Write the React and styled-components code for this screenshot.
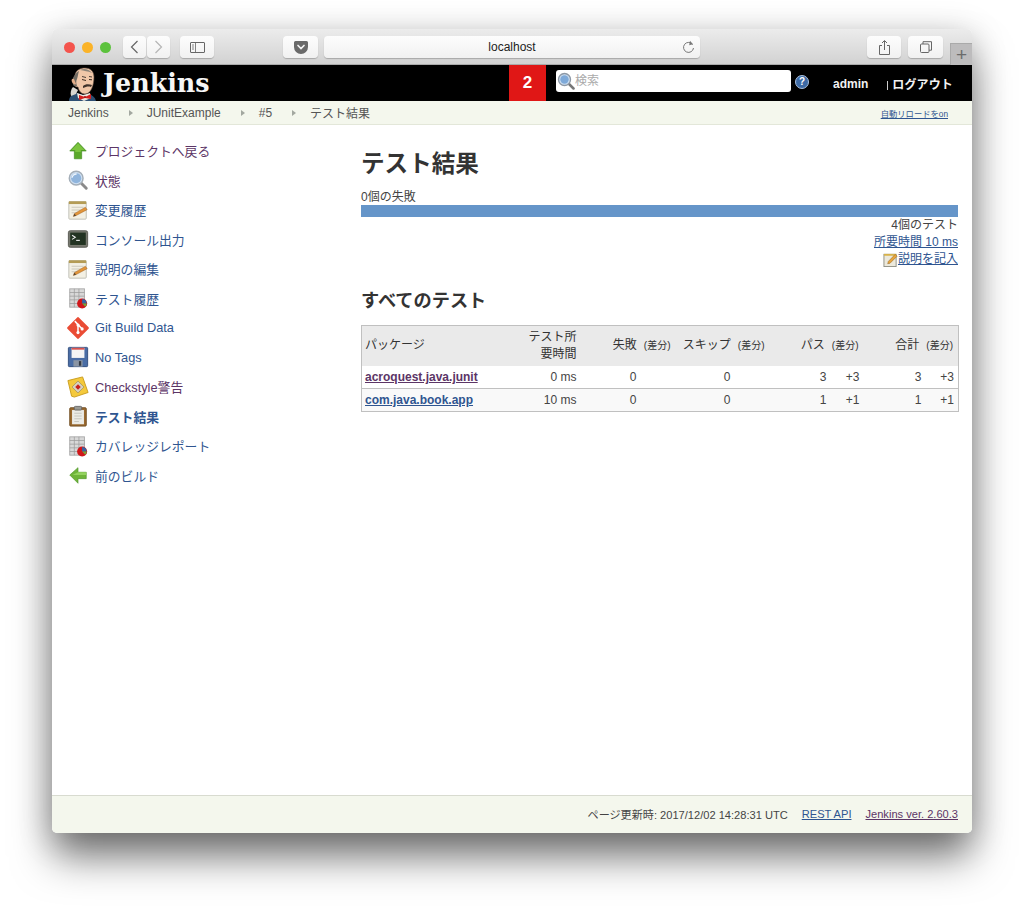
import React from "react";
import styled, { createGlobalStyle } from "styled-components";

const SANS = `"Liberation Sans", "Noto Sans CJK JP", sans-serif`;
const LINK = "#2f5590";
const VISITED = "#5c3566";

const Global = createGlobalStyle`
  html, body { margin: 0; padding: 0; background: #fff; }
  body { font-family: ${SANS}; }
  * { box-sizing: border-box; }
`;

const Stage = styled.div`
  width: 1024px; height: 907px; padding: 29px 52px 74px; overflow: hidden;
  background: #fff;
`;
const Win = styled.div`
  width: 920px; height: 804px; display: flex; flex-direction: column;
  border-radius: 5px; background: #fff;
  box-shadow: 0 26px 40px -2px rgba(0,0,0,.5), 0 6px 34px rgba(0,0,0,.22);
`;
const TitleBar = styled.div`
  height: 36px; flex: none; display: flex; align-items: center; padding: 1px 0 0 12px;
  border-radius: 5px 5px 0 0;
  background: linear-gradient(#ececec, #d2d2d2);
  border-bottom: 1px solid #aaa;
`;
const Lights = styled.div`display: flex; gap: 7px; margin-right: 12px;`;
const Light = styled.span`
  width: 11px; height: 11px; border-radius: 50%; background: ${p => p.$c};
`;
const ChromeBtn = styled.div`
  width: ${p => p.$w}px; height: 22px; margin-left: ${p => p.$ml || 0}px; flex: none;
  display: flex; align-items: center; justify-content: center;
  border-radius: 4px; background: linear-gradient(#fdfdfd, #f1f1f1);
  box-shadow: 0 1px 1px rgba(0,0,0,.22); color: ${p => p.$dim ? "#b5b5b5" : "#666"};
`;
const UrlBar = styled(ChromeBtn)`
  position: relative; font-size: 12px; color: #222; justify-content: center;
`;
const Reload = styled.span`
  position: absolute; right: 5px; top: 4px; display: flex; color: #777;
`;
const PlusTab = styled.div`
  width: 22px; height: 22px; margin-left: auto; align-self: flex-end; flex: none;
  background: #bdbcbd; border-left: 1px solid #aaa; border-top: 1px solid #aaa;
  color: #6b6b6b; font-size: 19px; font-weight: 300; line-height: 22px; text-align: center;
  margin-bottom: -1px;
`;

const Header = styled.header`
  height: 36px; flex: none; display: flex; align-items: stretch; background: #000; color: #fff;
  padding-left: 16px;
`;
const Brand = styled.div`display: flex; align-items: flex-end; width: 441px; flex: none;`;
const Wordmark = styled.span`
  font-family: "DejaVu Serif", serif; font-weight: 700; font-size: 25.4px; line-height: 34px;
  margin: 0 0 0 5px; align-self: center;
  color: #f6f6f6;
`;
const Badge = styled.div`
  width: 37px; background: #e01716; color: #fff; font-weight: 700; font-size: 17px;
  display: flex; align-items: center; justify-content: center; flex: none;
`;
const SearchBox = styled.div`
  width: 235px; height: 22px; margin: 5px 0 0 10px; border-radius: 3px; background: #fff; flex: none;
  display: flex; align-items: center; padding-left: 1px; color: #aaa; font-size: 12px;
`;
const Placeholder = styled.span`margin-top: -3px;`;
const HelpIcon = styled.div`
  width: 14px; height: 14px; margin: 10px 0 0 4px; border-radius: 50%; background: #3d6aa5;
  border: 1px solid #a9c0de; color: #fff; font-weight: 700; font-size: 10px; line-height: 12px;
  text-align: center; flex: none;
`;
const UserName = styled.span`
  font-size: 12px; font-weight: 700; margin-left: 24px; align-self: center; padding-top: 2px; color: #f2f2f2;
`;
const Logout = styled.span`
  font-size: 12px; font-weight: 700; margin-left: 19px; align-self: center; color: #f2f2f2; letter-spacing: .1px;
  &::before { content: ""; display: inline-block; width: 1px; height: 9px; background: #ccc; margin-right: 4px; vertical-align: -1px; }
`;

const Crumbs = styled.nav`
  height: 24px; flex: none; display: flex; align-items: center; padding: 0 24px 0 16px;
  background: #f4f7ed; border-bottom: 1px solid #e3e7d9; font-size: 12px; color: #555;
`;
const Crumb = styled.span``;
const CrumbArrow = styled.span`
  width: 0; height: 0; margin: 0 14px 0 20px;
  border-left: 4px solid #a3a8a0; border-top: 3.5px solid transparent; border-bottom: 3.5px solid transparent;
`;
const AutoReload = styled.a`
  margin-left: auto; font-size: 8.3px; color: ${LINK}; text-decoration: underline;
`;

const Body = styled.div`flex: 1; display: flex; min-height: 0;`;
const Side = styled.aside`
  width: 309px; flex: none; padding: 11px 0 0 15px; display: flex; flex-direction: column;
`;
const SideItem = styled.a`
  height: 29.5px; display: flex; align-items: center; gap: 6px; font-size: 12.8px;
  color: ${p => p.$visited ? VISITED : LINK}; font-weight: ${p => p.$active ? 700 : 400};
  svg { width: 22px; height: 22px; flex: none; }
`;
const Main = styled.main`flex: 1; padding: 25px 14px 0 0; min-width: 0;`;
const H1 = styled.h1`
  margin: 0; font-size: 23.6px; line-height: 28px; font-weight: 700; color: #333;
`;
const FailLine = styled.div`margin-top: 11px; font-size: 12px; line-height: 17px; color: #444;`;
const Bar = styled.div`height: 12px; background: #6595c9; margin-top: -1px;`;
const Meta = styled.div`
  text-align: right; font-size: 12px; line-height: 17px; color: #444;
`;
const MetaLink = styled.a`color: ${LINK}; text-decoration: underline; `;
const NoteIcon = styled.span`svg { width: 15px; height: 15px; vertical-align: -4px; }`;
const H2 = styled.h2`
  margin: 20px 0 11px; font-size: 18.2px; line-height: 26px; font-weight: 700; color: #333;
`;
const Table = styled.table`
  width: 597px; table-layout: fixed; border-collapse: collapse; font-size: 12px; color: #444;
  border: 1px solid #c0c0c0;
`;
const Th = styled.th`
  background: #eaeaea; font-weight: 400; height: 40px; line-height: 17px;
  padding: 0 4px 0 ${p => p.$left ? 3 : 4}px;
  text-align: ${p => p.$left ? "left" : "right"}; color: #333;
`;
const Small = styled.small`font-size: 10px; margin: 0 1px 0 7px;`;
const Tr = styled.tr`
  background: ${p => p.$alt ? "#f9f9f9" : "#fff"}; border-bottom: 1px solid #c0c0c0;
`;
const Td = styled.td`
  height: 23px; padding: 0 4px; text-align: right;
`;
const NameTd = styled(Td)`text-align: left; padding-left: 3px;`;
const PkgLink = styled.a`
  font-weight: 700; text-decoration: underline;
  color: ${p => p.$visited ? VISITED : LINK};
`;
const Footer = styled.footer`
  height: 38px; flex: none; display: flex; align-items: center; justify-content: flex-end; gap: 14px;
  padding: 0 14px 1px; background: #f4f7ed; border-top: 1px solid #d8dbd0; font-size: 11.1px; color: #444;
  border-radius: 0 0 5px 5px;
`;
const FootLink = styled.a`
  color: ${p => p.$visited ? VISITED : LINK}; text-decoration: underline;
`;

/* ---- icons ---- */
const UpArrow = () => (
  <svg viewBox="0 0 24 24"><path d="M12 2.5 21 12h-5v8.5H8V12H3z" fill="#5aa82a" stroke="#3f8a1c" strokeWidth=".7"/><path d="M12 3.5 19 11h-4v2H9v-2H5z" fill="#7cc43f"/></svg>
);
const LeftArrow = () => (
  <svg viewBox="0 0 24 24"><path d="M3 12l9-8v5h9v7h-9v5z" fill="#6fb43a" stroke="#4f9528" strokeWidth=".7"/><path d="M12 9h9v3H6z" fill="#93d25e"/></svg>
);
const Magnifier = () => (
  <svg viewBox="0 0 24 24">
    <path d="M14.5 14.5 21 21" stroke="#8a8a8a" strokeWidth="3.2" strokeLinecap="round"/>
    <circle cx="10" cy="10" r="7.5" fill="#cfe0f2" stroke="#a4aeb8" strokeWidth="1.6"/>
    <circle cx="10" cy="10" r="5.5" fill="#8fb4dc"/>
    <path d="M5.5 9.5a4.5 4.5 0 0 1 5-4" fill="none" stroke="#eef5fc" strokeWidth="1.4"/>
  </svg>
);
const Notepad = () => (
  <svg viewBox="0 0 24 24">
    <rect x="2" y="3" width="19" height="19" rx="1" fill="#f3f0e4" stroke="#bdbdb3"/>
    <rect x="2" y="2.5" width="19" height="3" fill="#b49c55"/>
    <path d="M5 9h13M5 12h10M5 15h6" stroke="#c9c6b8"/>
    <path d="M7 19l1-3L20 9l2 2.6L10 18z" fill="#e2953a" stroke="#9a5c1e" strokeWidth=".5"/>
    <path d="M7 19l1-3 2 2z" fill="#5a4630"/>
  </svg>
);
const Terminal = () => (
  <svg viewBox="0 0 24 24">
    <rect x="1.5" y="3" width="21" height="18" rx="2" fill="#77796f" stroke="#55574f"/>
    <rect x="3.5" y="5" width="17" height="13.5" fill="#223322"/>
    <path d="M5.5 8l3.5 2.2-3.5 2.2" fill="none" stroke="#eee" strokeWidth="1.2"/>
    <path d="M10 13.5h4" stroke="#eee" strokeWidth="1.2"/>
  </svg>
);
const ChartDoc = () => (
  <svg viewBox="0 0 24 24">
    <rect x="3" y="2" width="16" height="20" fill="#d8d8d8" stroke="#a9a9a9"/>
    <path d="M3 6h16M3 10h16M3 14h16M3 18h16M8 2v20M13 2v20" stroke="#9a9a9a" strokeWidth=".8"/>
    <circle cx="16.5" cy="18" r="5.5" fill="#d0161a"/>
    <path d="M16.5 18V13a5 5 0 0 1 5 5z" fill="#3465a4"/>
    <path d="M16.5 18h5a5 5 0 0 1-1.5 3.5z" fill="#73a63a"/>
  </svg>
);
const GitIcon = () => (
  <svg viewBox="0 0 24 24">
    <rect x="3.2" y="3.2" width="17.6" height="17.6" rx="1.6" transform="rotate(45 12 12)" fill="#ea4c35"/>
    <path d="M8.5 4.5l8 8.5M12 9v8" stroke="#fff" strokeWidth="1.6" fill="none"/>
    <circle cx="12" cy="8.8" r="1.7" fill="#fff"/><circle cx="12" cy="17" r="1.7" fill="#fff"/><circle cx="16.5" cy="13" r="1.7" fill="#fff"/>
  </svg>
);
const Floppy = () => (
  <svg viewBox="0 0 24 24">
    <rect x="1.5" y="1.5" width="21" height="21" rx="1" fill="#4a6da5" stroke="#2f4c7c"/>
    <rect x="5" y="2" width="14" height="11" fill="#f5f5f5"/>
    <rect x="5" y="2" width="14" height="2" fill="#d9534f"/>
    <rect x="7" y="15.5" width="10" height="7" fill="#8b95a3"/>
    <rect x="13" y="16.5" width="2.5" height="5" fill="#333a44"/>
  </svg>
);
const CheckNote = () => (
  <svg viewBox="0 0 24 24">
    <path d="M1 5 17 1l6 17-15 5-3-1z" fill="#f4c93c" stroke="#c89a1a"/>
    <path d="M12 5.5l6.5 6.5-6.5 6.5L5.5 12z" fill="#d8d2c0" stroke="#8a7a4a" strokeWidth=".6"/>
    <path d="M12 9l3 3-3 3-3-3z" fill="#c8201e"/>
  </svg>
);
const Clipboard = () => (
  <svg viewBox="0 0 24 24">
    <rect x="3" y="3" width="18" height="20" rx="1" fill="#9a6a30" stroke="#6f4a1e"/>
    <rect x="5.5" y="5.5" width="13" height="15.5" fill="#ebebe6"/>
    <path d="M8 9h8M8 12h8M8 15h8M8 18h5" stroke="#c3c3bc"/>
    <rect x="8" y="1.5" width="8" height="4" rx="1" fill="#9a9a94" stroke="#666"/>
  </svg>
);
const SmallNote = () => (
  <svg viewBox="0 0 16 16">
    <rect x="1" y="2.5" width="13" height="13" fill="#ece9dc" stroke="#8f8f85"/>
    <rect x="1" y="2" width="13" height="2" fill="#d8b24a"/>
    <path d="M5 12.5l.7-2.5L13 2.5l2 2L7.5 12z" fill="#e8a53c" stroke="#8a5a1c" strokeWidth=".5"/>
  </svg>
);
const SearchGlass = () => (
  <svg width="18" height="18" viewBox="0 0 24 24">
    <path d="M15 15l7 7" stroke="#777" strokeWidth="3.4" strokeLinecap="round"/>
    <circle cx="10" cy="10" r="8" fill="#cfe0f2" stroke="#8d98a5" strokeWidth="1.8"/>
    <circle cx="10" cy="10" r="5.6" fill="#7ea9d8"/>
  </svg>
);
const Mascot = () => (
  <svg width="30" height="34" viewBox="0 0 30 34" style={{ flex: "none" }}>
    {/* jacket */}
    <path d="M1 34c0-4 3-7 8-8l6 2 6-1c3 1 6 3 7 7z" fill="#2d4f72"/>
    {/* shirt */}
    <path d="M9 26l6 2 7-2 1 5-7 3-6-3z" fill="#eee9e0"/>
    {/* neck hand shadow */}
    <path d="M5 20c-2 2-3 6-2 9l5-2 2-4z" fill="#d9d6d0"/>
    {/* head */}
    <path d="M7 8C8 3 12 1 17 1c5 0 9 3 9 9 0 8-3 17-9 17-4 0-6-3-7-7-3 0-5-2-5-5 0-3 1-5 2-7z" fill="#f0c7a8" stroke="#5c4a40" strokeWidth=".6"/>
    {/* hair at the back */}
    <path d="M7 8C4 11 4 16 6 19l3 0c-1-3-1-5 0-7 1-3 1-5 2-8C9 5 8 6 7 8z" fill="#6f6a62"/>
    <path d="M12 3c4-2 9-1 12 3-4-2-8-2-12-3z" fill="#8b8378"/>
    {/* ear */}
    <path d="M6 12c-2-1-3 1-2 3s3 3 4 2z" fill="#e3ad88"/>
    {/* brows and closed eyes */}
    <path d="M14 9.5l4 1M21 9.5l3 .5" stroke="#4a4038" strokeWidth="1"/>
    <path d="M14 12.5l4 1M21 12.5l3 .3" stroke="#3a2a20" strokeWidth="1"/>
    {/* moustache */}
    <path d="M15 19c2-2 6-2 9-1l-1 2c-3-1-5 0-8 1z" fill="#3f332c"/>
    {/* bow tie */}
    <path d="M11 28l6 2 6-3v5l-6-1-6 2z" fill="#d4201f"/>
    <circle cx="17" cy="30" r="1.1" fill="#a81514"/>
  </svg>
);

const BackIcon = () => <svg width="9" height="14" viewBox="0 0 9 14"><path d="M7.5 1 1.5 7l6 6" fill="none" stroke="currentColor" strokeWidth="1.2"/></svg>;
const FwdIcon = () => <svg width="9" height="14" viewBox="0 0 9 14"><path d="M1.5 1l6 6-6 6" fill="none" stroke="currentColor" strokeWidth="1.2"/></svg>;
const SidebarIcon = () => <svg width="15" height="11" viewBox="0 0 15 11"><rect x=".5" y=".5" width="14" height="10" rx=".5" fill="none" stroke="currentColor"/><path d="M5.5 .5v10M2 3h2M2 5h2M2 7h2" stroke="currentColor" strokeWidth=".8"/></svg>;
const PocketIcon = () => <svg width="14" height="13" viewBox="0 0 14 13"><path d="M1.5 0h11A1.5 1.5 0 0 1 14 1.5V6A7 7 0 0 1 0 6V1.5A1.5 1.5 0 0 1 1.5 0z" fill="#6a6a6a"/><path d="M4 4.5 7 7.5 10 4.5" fill="none" stroke="#f4f4f4" strokeWidth="1.7" strokeLinecap="round"/></svg>;
const ReloadIcon = () => <svg width="13" height="14" viewBox="0 0 13 14"><path d="M10.6 4.5A5 5 0 1 0 11.5 8" fill="none" stroke="currentColor" strokeWidth="1"/><path d="M8 .8l3 3.4-3.8 1z" fill="currentColor"/></svg>;
const ShareIcon = () => <svg width="11" height="15" viewBox="0 0 11 15"><path d="M3 5.5H.5v9h10v-9H8" fill="none" stroke="currentColor"/><path d="M5.5 10V1M3 3l2.5-2.5L8 3" fill="none" stroke="currentColor"/></svg>;
const TabsIcon = () => <svg width="12" height="12" viewBox="0 0 12 12"><rect x=".5" y="3" width="8.5" height="8.5" rx="1" fill="none" stroke="currentColor"/><path d="M3 3V.7h8.5v8.5H9" fill="none" stroke="currentColor"/></svg>;

const NAV = [
  [UpArrow, "プロジェクトへ戻る", true],
  [Magnifier, "状態", true],
  [Notepad, "変更履歴"],
  [Terminal, "コンソール出力"],
  [Notepad, "説明の編集"],
  [ChartDoc, "テスト履歴"],
  [GitIcon, "Git Build Data"],
  [Floppy, "No Tags"],
  [CheckNote, "Checkstyle警告", true],
  [Clipboard, "テスト結果", false, true],
  [ChartDoc, "カバレッジレポート"],
  [LeftArrow, "前のビルド"],
];

const ROWS = [
  { name: "acroquest.java.junit", visited: true, time: "0 ms", fail: "0", skip: "0", pass: "3", dp: "+3", total: "3", dt: "+3" },
  { name: "com.java.book.app", time: "10 ms", fail: "0", skip: "0", pass: "1", dp: "+1", total: "1", dt: "+1" },
];
const COLS = [143, 76, 60, 35, 59, 35, 61, 33, 62, 33];

export default function App() {
  return (
    <Stage>
      <Global />
      <Win>
        <TitleBar>
          <Lights>
            <Light $c="#f4544d" /><Light $c="#fbb328" /><Light $c="#5cc23d" />
          </Lights>
          <ChromeBtn $w={23}><BackIcon /></ChromeBtn>
          <ChromeBtn $w={23} $ml={1} $dim><FwdIcon /></ChromeBtn>
          <ChromeBtn $w={34} $ml={10}><SidebarIcon /></ChromeBtn>
          <ChromeBtn $w={35} $ml={69}><PocketIcon /></ChromeBtn>
          <UrlBar $w={376} $ml={6}>localhost<Reload><ReloadIcon /></Reload></UrlBar>
          <ChromeBtn $w={34} $ml={167}><ShareIcon /></ChromeBtn>
          <ChromeBtn $w={35} $ml={7}><TabsIcon /></ChromeBtn>
          <PlusTab>+</PlusTab>
        </TitleBar>
        <Header>
          <Brand><Mascot /><Wordmark>Jenkins</Wordmark></Brand>
          <Badge>2</Badge>
          <SearchBox><SearchGlass /><Placeholder>検索</Placeholder></SearchBox>
          <HelpIcon>?</HelpIcon>
          <UserName>admin</UserName>
          <Logout>ログアウト</Logout>
        </Header>
        <Crumbs>
          <Crumb>Jenkins</Crumb><CrumbArrow />
          <Crumb>JUnitExample</Crumb><CrumbArrow />
          <Crumb>#5</Crumb><CrumbArrow />
          <Crumb>テスト結果</Crumb>
          <AutoReload>自動リロードをon</AutoReload>
        </Crumbs>
        <Body>
          <Side>
            {NAV.map(([Icon, label, visited, active]) => (
              <SideItem key={label} $visited={visited} $active={active}>
                <Icon />{label}
              </SideItem>
            ))}
          </Side>
          <Main>
            <H1>テスト結果</H1>
            <FailLine>0個の失敗</FailLine>
            <Bar />
            <Meta>4個のテスト</Meta>
            <Meta><MetaLink>所要時間 10 ms</MetaLink></Meta>
            <Meta><NoteIcon><SmallNote /></NoteIcon><MetaLink>説明を記入</MetaLink></Meta>
            <H2>すべてのテスト</H2>
            <Table>
              <colgroup>{COLS.map((w, i) => <col key={i} style={{ width: w }} />)}</colgroup>
              <thead>
                <tr>
                  <Th $left>パッケージ</Th>
                  <Th>テスト所<br />要時間</Th>
                  <Th colSpan={2}>失敗<Small>(差分)</Small></Th>
                  <Th colSpan={2}>スキップ<Small>(差分)</Small></Th>
                  <Th colSpan={2}>パス<Small>(差分)</Small></Th>
                  <Th colSpan={2}>合計<Small>(差分)</Small></Th>
                </tr>
              </thead>
              <tbody>
                {ROWS.map((r, i) => (
                  <Tr key={r.name} $alt={i === 1}>
                    <NameTd><PkgLink $visited={r.visited}>{r.name}</PkgLink></NameTd>
                    <Td>{r.time}</Td>
                    <Td>{r.fail}</Td><Td />
                    <Td>{r.skip}</Td><Td />
                    <Td>{r.pass}</Td><Td>{r.dp}</Td>
                    <Td>{r.total}</Td><Td>{r.dt}</Td>
                  </Tr>
                ))}
              </tbody>
            </Table>
          </Main>
        </Body>
        <Footer>
          <span>ページ更新時: 2017/12/02 14:28:31 UTC</span>
          <FootLink>REST API</FootLink>
          <FootLink $visited>Jenkins ver. 2.60.3</FootLink>
        </Footer>
      </Win>
    </Stage>
  );
}
